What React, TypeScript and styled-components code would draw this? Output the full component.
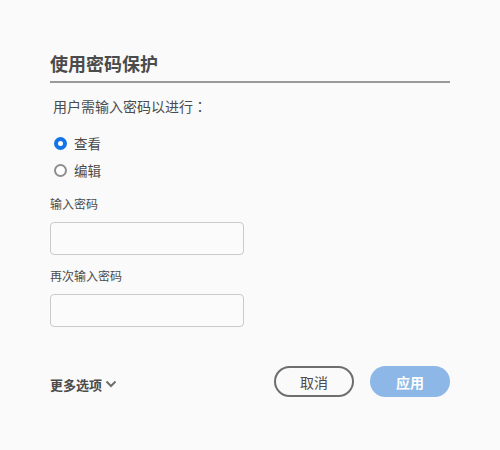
import React from "react";
import styled, { createGlobalStyle } from "styled-components";

const Global = createGlobalStyle`
  html, body { margin: 0; padding: 0; background: #fafafa; }
  body { font-family: "Noto Sans CJK SC", "Noto Sans", sans-serif; color: #4b4b4b; }
`;

const Dialog = styled.div`
  width: 400px;
  padding: 51px 50px 0 50px;
  display: flex;
  flex-direction: column;
`;

const Title = styled.h2`
  margin: 0;
  font-size: 18px;
  line-height: 24px;
  font-weight: 700;
  color: #4b4b4b;
  padding-bottom: 6px;
  border-bottom: 2px solid #9a9a9a;
`;

const Subtitle = styled.p`
  margin: 13px 0 0 3px;
  font-size: 14px;
  line-height: 20px;
  color: #4b4b4b;
`;

const Colon = styled.span`
  font-family: "Noto Sans CJK TC", sans-serif;
`;

const RadioGroup = styled.div`
  margin-top: 18px;
  display: flex;
  flex-direction: column;
  gap: 9px;
`;

const RadioRow = styled.label`
  display: flex;
  align-items: center;
  gap: 7px;
  padding-left: 4px;
  height: 18px;
  font-size: 13.5px;
  color: #4b4b4b;
`;

const RadioCircle = styled.span<{ $checked?: boolean }>`
  box-sizing: border-box;
  width: 13px;
  height: 13px;
  border-radius: 50%;
  border: ${(p) => (p.$checked ? "4px solid #1473e6" : "2px solid #8e8e8e")};
  background: #fff;
`;

const FieldLabel = styled.div<{ $top: number }>`
  margin-top: ${(p) => p.$top}px;
  font-size: 12px;
  line-height: 16px;
  color: #4b4b4b;
`;

const Input = styled.input`
  box-sizing: border-box;
  margin-top: 10px;
  width: 194px;
  height: 33px;
  border: 1px solid #cacaca;
  border-radius: 4px;
  background: #fbfbfb;
  outline: none;
  font-family: inherit;
`;

const Footer = styled.div`
  margin-top: 39px;
  display: flex;
  align-items: center;
  justify-content: space-between;
`;

const More = styled.button`
  display: flex;
  align-items: center;
  gap: 3px;
  padding: 0;
  margin-top: 5px;
  background: none;
  border: none;
  font-family: inherit;
  font-size: 13px;
  font-weight: 700;
  color: #4b4b4b;
`;

const Buttons = styled.div`
  display: flex;
  gap: 16px;
`;

const Button = styled.button<{ $primary?: boolean }>`
  box-sizing: border-box;
  width: 80px;
  height: 31px;
  border-radius: 16px;
  font-family: inherit;
  font-size: 14px;
  font-weight: ${(p) => (p.$primary ? 700 : 400)};
  color: ${(p) => (p.$primary ? "#ffffff" : "#4b4b4b")};
  background: ${(p) => (p.$primary ? "#8cb7e6" : "transparent")};
  border: ${(p) => (p.$primary ? "none" : "2px solid #6e6e6e")};
  padding: 0;
`;

export default function App() {
  return (
    <>
      <Global />
      <Dialog>
        <Title>使用密码保护</Title>
        <Subtitle>
          用户需输入密码以进行<Colon>：</Colon>
        </Subtitle>
        <RadioGroup>
          <RadioRow>
            <RadioCircle $checked />
            查看
          </RadioRow>
          <RadioRow>
            <RadioCircle />
            编辑
          </RadioRow>
        </RadioGroup>
        <FieldLabel $top={17}>输入密码</FieldLabel>
        <Input type="password" />
        <FieldLabel $top={13}>再次输入密码</FieldLabel>
        <Input type="password" />
        <Footer>
          <More>
            更多选项
            <svg width="12" height="8" viewBox="0 0 12 8">
              <path d="M1.5 1.5 L6 6 L10.5 1.5" fill="none" stroke="#6e6e6e" strokeWidth="2" />
            </svg>
          </More>
          <Buttons>
            <Button>取消</Button>
            <Button $primary>应用</Button>
          </Buttons>
        </Footer>
      </Dialog>
    </>
  );
}
